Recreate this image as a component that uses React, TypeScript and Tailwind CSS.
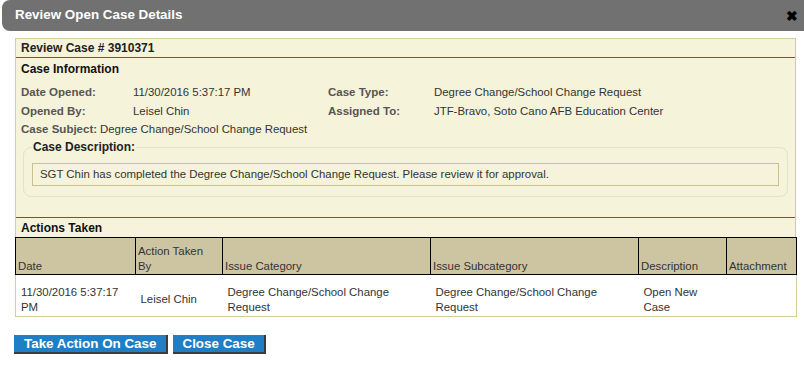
const font = "font-['Liberation_Sans',Arial,sans-serif]";

const headers = ['Date', 'Action Taken By', 'Issue Category', 'Issue Subcategory', 'Description', 'Attachment'];
const widths = ['w-[120px]', 'w-[87px]', 'w-[208px]', 'w-[208px]', 'w-[88px]', 'w-[70px]'];

const App = () => {
    return (
        <div className={`w-[804px] h-[391px] bg-white overflow-hidden text-[#333] ${font}`}>
            {/* title bar */}
            <div className="ml-[2px] h-[31px] bg-[#717171] rounded-l-[8px] flex items-center justify-between pl-[13px] pr-[6px]">
                <span className="text-white font-bold text-[13.4px]">Review Open Case Details</span>
                <span className="text-black font-bold text-[14px] leading-none">✖</span>
            </div>

            <div className="pl-[15px] pt-[7px] w-[796px]">
                <div className="border border-b-0 border-[#d6cc9c] bg-[#f5f3da]">
                    <div className="h-[18px] px-[5px] flex items-center font-bold text-[12px] text-[#222]">Review Case # 3910371</div>
                    <div className="border-t border-[#6b5a32]"></div>

                    <div className="px-[5px] pt-[2px] h-[159px]">
                        <div className="h-[18px] flex items-center font-bold text-[12px] text-[#111]">Case Information</div>
                        <div className="mt-[5px] grid grid-cols-[112px_195px_106px_1fr] text-[11.4px] items-center">
                            <div className="h-[19px] flex items-center font-bold text-[11.5px] text-[#555]">Date Opened:</div>
                            <div>11/30/2016 5:37:17 PM</div>
                            <div className="font-bold text-[11.5px] text-[#555]">Case Type:</div>
                            <div>Degree Change/School Change Request</div>
                            <div className="h-[19px] flex items-center font-bold text-[11.5px] text-[#555]">Opened By:</div>
                            <div>Leisel Chin</div>
                            <div className="font-bold text-[11.5px] text-[#555]">Assigned To:</div>
                            <div>JTF-Bravo, Soto Cano AFB Education Center</div>
                        </div>
                        <div className="h-[17px] flex items-center text-[11.4px]">
                            <span className="font-bold text-[11.5px] text-[#555] mr-[3px]">Case Subject:</span>
                            Degree Change/School Change Request
                        </div>
                        <fieldset className="ml-[2px] w-[765px] border border-[#e2e1d2] rounded-[8px] px-[8px] pb-[10px]">
                            <legend className="px-[1px] font-bold text-[12px] text-[#222]">Case Description:</legend>
                            <div className="mt-[7px] h-[23px] border border-[#cbbf8c] px-[7px] flex items-center text-[11.4px]">
                                SGT Chin has completed the Degree Change/School Change Request. Please review it for approval.
                            </div>
                        </fieldset>
                    </div>

                    <div className="border-t border-[#6b5a32]"></div>
                    <div className="h-[19px] px-[5px] flex items-center font-bold text-[12px] text-[#111]">Actions Taken</div>
                </div>

                <table className="w-[781px] border-collapse text-[11.4px] table-fixed">
                    <thead>
                        <tr className="bg-[#cdc5a1] h-[37px]">
                            {headers.map((h, i) => (
                                <th key={i} className={`${widths[i]} border border-black px-[2px] text-left align-bottom font-normal text-[#333] leading-[15px]`}>
                                    {h === 'Action Taken By' ? (
                                        <>
                                            Action Taken
                                            <br />
                                            By
                                        </>
                                    ) : (
                                        h
                                    )}
                                </th>
                            ))}
                        </tr>
                    </thead>
                    <tbody>
                        <tr className="bg-white h-[42px] border border-[#d6cc9c] leading-[15px]">
                            <td className="px-[5px] pt-[8px]">11/30/2016 5:37:17 PM</td>
                            <td className="px-[5px] pt-[8px]">Leisel Chin</td>
                            <td className="px-[5px] pt-[8px]">Degree Change/School Change Request</td>
                            <td className="px-[5px] pt-[8px]">Degree Change/School Change Request</td>
                            <td className="px-[5px] pt-[8px]">
                                Open New
                                <br />
                                Case
                            </td>
                            <td className="px-[5px] pt-[8px]"></td>
                        </tr>
                    </tbody>
                </table>
            </div>

            <div className="pl-[14px] mt-[18px] flex gap-[5px]">
                <button className="h-[19px] px-[10px] bg-[#1f7fc6] text-white font-bold text-[13.4px] leading-none border-r-2 border-b-2 border-[#3b3b3b]">
                    Take Action On Case
                </button>
                <button className="h-[19px] px-[9px] bg-[#1f7fc6] text-white font-bold text-[13.4px] leading-none border-r-2 border-b-2 border-[#3b3b3b]">
                    Close Case
                </button>
            </div>
        </div>
    );
};

export default App;
